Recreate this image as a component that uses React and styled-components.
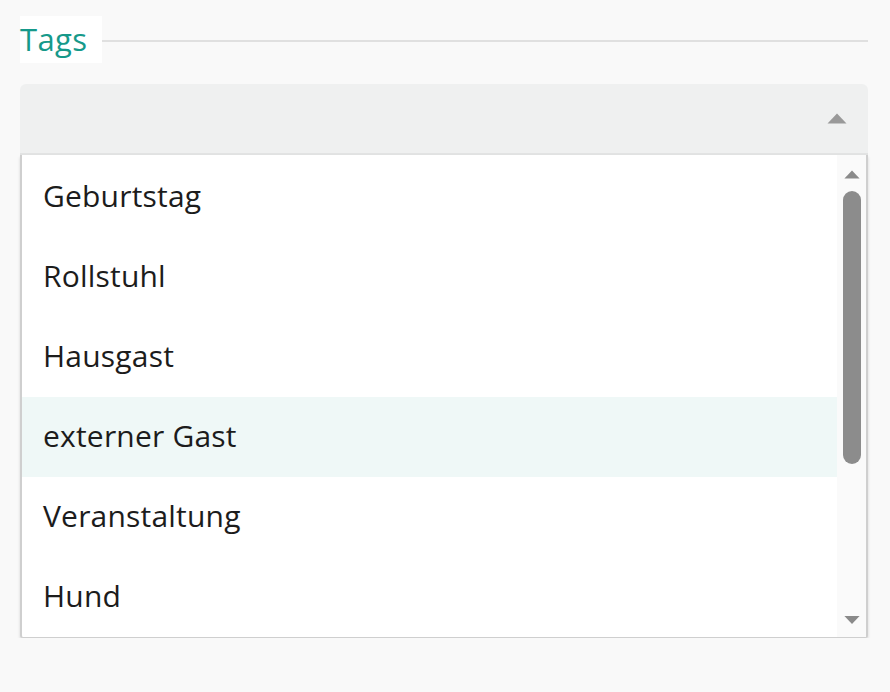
import React from "react";
import styled, { createGlobalStyle } from "styled-components";

const Global = createGlobalStyle`
  html, body { margin: 0; padding: 0; background: #f9f9f9; }
  body { font-family: "Open Sans", "Noto Sans", sans-serif; }
`;

const Page = styled.div`
  padding: 16px 22px 0 20px;
  width: 848px;
`;

const LegendRow = styled.div`
  display: flex;
  align-items: center;
`;

const Legend = styled.div`
  background: #ffffff;
  height: 47px;
  width: 82px;
  box-sizing: border-box;
  display: flex;
  align-items: center;
  padding-bottom: 2px;
  font-size: 31px;
  color: #16998a;
  letter-spacing: 0.4px;
`;

const Rule = styled.div`
  flex: 1;
  height: 2px;
  background: #e0e0e0;
  margin-top: 2px;
`;

const Control = styled.div`
  margin-top: 21px;
  height: 69px;
  background: #eff0f0;
  border-radius: 6px 6px 0 0;
  border-bottom: 2px solid #e2e3e3;
  display: flex;
  align-items: center;
  justify-content: flex-end;
  padding-right: 21px;
`;

const Menu = styled.div`
  display: flex;
  background: #ffffff;
  border-left: 2px solid #cfcfcf;
  border-right: 2px solid #cfcfcf;
  border-bottom: 1px solid #cfcfcf;
  border-radius: 0 0 3px 3px;
  box-shadow: 0 2px 3px rgba(0, 0, 0, 0.15);
  height: 482px;
`;

const List = styled.ul`
  list-style: none;
  margin: 0;
  padding: 2px 0 0;
  flex: 1;
`;

const Option = styled.li`
  height: 80px;
  box-sizing: border-box;
  display: flex;
  align-items: center;
  padding: 0 0 4px 21px;
  font-size: 30px;
  color: #1c1c1c;
  letter-spacing: 0.2px;
  background: ${(p) => (p.$active ? "#eff8f7" : "transparent")};
`;

const Track = styled.div`
  width: 29px;
  background: #fafafa;
  display: flex;
  flex-direction: column;
  align-items: center;
  padding-top: 14px;
  box-sizing: border-box;
`;

const Thumb = styled.div`
  width: 18px;
  height: 273px;
  border-radius: 9px;
  background: #8c8c8c;
  margin-top: 11px;
`;

const Spacer = styled.div`
  flex: 1;
`;

const DownWrap = styled.div`
  margin-bottom: 11px;
`;

const Arrow = ({ dir, w, h, color }) => (
  <svg width={w} height={h} viewBox="0 0 20 11" style={{ display: "block" }}>
    {dir === "up" ? (
      <path d="M10 0.5 L19.5 10.5 L0.5 10.5 Z" fill={color} />
    ) : (
      <path d="M0.5 0.5 L19.5 0.5 L10 10.5 Z" fill={color} />
    )}
  </svg>
);

const options = [
  "Geburtstag",
  "Rollstuhl",
  "Hausgast",
  "externer Gast",
  "Veranstaltung",
  "Hund",
];

export default function App() {
  return (
    <>
      <Global />
      <Page>
        <LegendRow>
          <Legend>Tags</Legend>
          <Rule />
        </LegendRow>
        <Control>
          <Arrow dir="up" w={20} h={11} color="#999999" />
        </Control>
        <Menu>
          <List>
            {options.map((o, i) => (
              <Option key={o} $active={i === 3}>
                {o}
              </Option>
            ))}
          </List>
          <Track>
            <Arrow dir="up" w={16} h={11} color="#8a8a8a" />
            <Thumb />
            <Spacer />
            <DownWrap>
              <Arrow dir="down" w={16} h={12} color="#8a8a8a" />
            </DownWrap>
          </Track>
        </Menu>
      </Page>
    </>
  );
}
